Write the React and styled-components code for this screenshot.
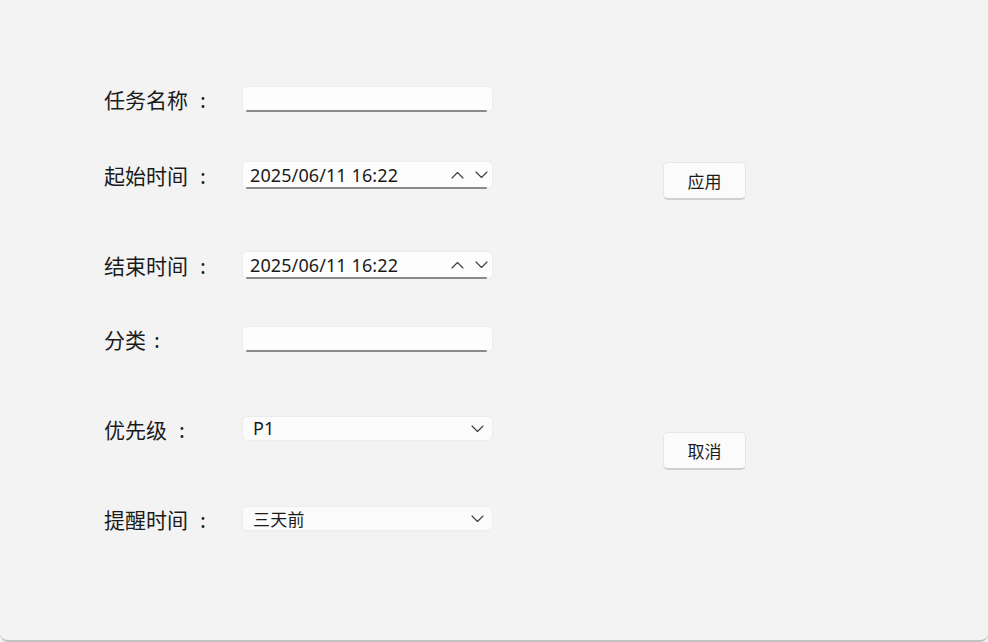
import React from "react";
import styled, { createGlobalStyle } from "styled-components";

const Global = createGlobalStyle`
  html, body {
    margin: 0;
    padding: 0;
    background: #f3f3f3;
  }
  body {
    font-family: "Noto Sans", "Noto Sans CJK SC", sans-serif;
    color: #1a1a1a;
  }
`;

const Window = styled.div`
  box-sizing: border-box;
  width: 988px;
  height: 642px;
  background: #f3f3f3;
  border-bottom: 2px solid #c2c2c2;
  border-radius: 0 0 8px 8px;
  display: flex;
  overflow: hidden;
`;

const Form = styled.div`
  display: flex;
  flex-direction: column;
  padding: 86px 0 0 104px;
  width: 389px;
`;

const Row = styled.div`
  display: flex;
  align-items: center;
  height: ${(p) => p.h}px;
  margin-top: ${(p) => p.gap || 0}px;
`;

const Label = styled.div`
  width: 138px;
  flex: none;
  display: flex;
  align-items: center;
  font-family: "Noto Sans CJK SC", sans-serif;
  font-size: 21px;
  line-height: 26px;
  color: #1b1b1b;
`;

const Colon = styled.span`
  margin-left: ${(p) => p.space}px;
`;

const Field = styled.div`
  position: relative;
  box-sizing: border-box;
  width: 251px;
  height: 100%;
  background: ${(p) => (p.combo ? "#fbfbfb" : "#fdfdfd")};
  border: 1px solid #ececec;
  border-radius: 5px;
  display: flex;
  align-items: center;
  padding: 0 8px 0 ${(p) => (p.combo ? 10 : 7)}px;

  ${(p) =>
    p.underline &&
    `
    &::after {
      content: "";
      position: absolute;
      left: 3px;
      right: 5px;
      bottom: -1px;
      height: 2px;
      background: #8a8a8a;
      border-radius: 1px;
    }
  `}
`;

const Value = styled.span`
  flex: 1;
  font-family: ${(p) =>
    p.cjk ? `"Noto Sans CJK SC", sans-serif` : `"Noto Sans", sans-serif`};
  font-size: ${(p) => (p.cjk ? 17 : 18)}px;
  color: #1a1a1a;
  white-space: nowrap;
  letter-spacing: ${(p) => (p.cjk ? 0.3 : 0.1)}px;
  margin-top: -1px;
`;

const Arrows = styled.div`
  display: flex;
  align-items: center;
  gap: 11px;
  margin-right: -4px;
`;

const Chevron = ({ up }) => (
  <svg width="13" height="8" viewBox="0 0 13 8" fill="none">
    <path
      d={up ? "M1 7 L6.5 1.5 L12 7" : "M1 1 L6.5 6.5 L12 1"}
      stroke="#3a3a3a"
      strokeWidth="1.1"
      strokeLinecap="round"
      strokeLinejoin="round"
    />
  </svg>
);

const Buttons = styled.div`
  display: flex;
  flex-direction: column;
  padding: 162px 0 0 170px;
`;

const Button = styled.button`
  box-sizing: border-box;
  width: 83px;
  height: 38px;
  margin-top: ${(p) => p.gap || 0}px;
  background: #fbfbfb;
  border: 1px solid #e6e6e6;
  border-bottom: 2px solid #cfcfcf;
  border-radius: 5px;
  font-family: "Noto Sans CJK SC", sans-serif;
  font-size: 17px;
  color: #1a1a1a;
  padding: 0 0 1px;
  cursor: pointer;
`;

const FormLabel = ({ text, space }) => (
  <Label>
    {text}
    <Colon space={space}>:</Colon>
  </Label>
);

const DateField = ({ value }) => (
  <Field underline>
    <Value>{value}</Value>
    <Arrows>
      <Chevron up />
      <Chevron />
    </Arrows>
  </Field>
);

const ComboField = ({ value, cjk }) => (
  <Field combo>
    <Value cjk={cjk}>{value}</Value>
    <Chevron />
  </Field>
);

export default function App() {
  return (
    <>
      <Global />
      <Window>
        <Form>
          <Row h={26}>
            <FormLabel text="任务名称" space={12} />
            <Field underline />
          </Row>
          <Row h={28} gap={49}>
            <FormLabel text="起始时间" space={12} />
            <DateField value="2025/06/11 16:22" />
          </Row>
          <Row h={28} gap={62}>
            <FormLabel text="结束时间" space={12} />
            <DateField value="2025/06/11 16:22" />
          </Row>
          <Row h={26} gap={47}>
            <FormLabel text="分类" space={8} />
            <Field underline />
          </Row>
          <Row h={25} gap={64}>
            <FormLabel text="优先级" space={12} />
            <ComboField value="P1" />
          </Row>
          <Row h={25} gap={65}>
            <FormLabel text="提醒时间" space={12} />
            <ComboField value="三天前" cjk />
          </Row>
        </Form>
        <Buttons>
          <Button>应用</Button>
          <Button gap={232}>取消</Button>
        </Buttons>
      </Window>
    </>
  );
}
